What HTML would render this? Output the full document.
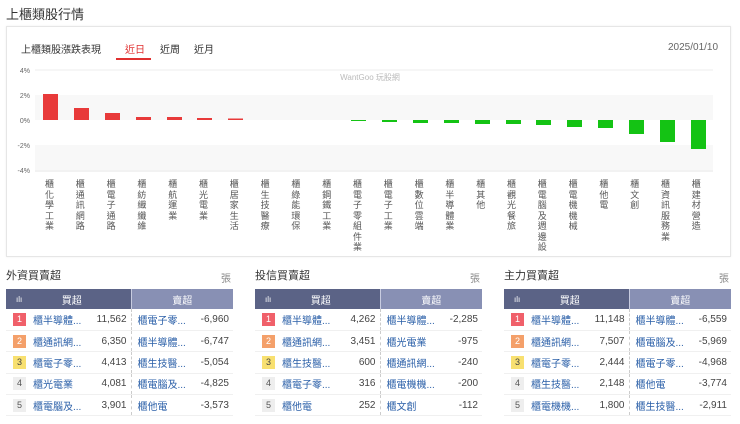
<!DOCTYPE html>
<html><head><meta charset="utf-8"><style>
*{margin:0;padding:0;box-sizing:border-box}
body{width:740px;height:424px;background:#fff;font-family:"Liberation Sans","Noto Sans CJK TC",sans-serif;color:#333;position:relative;overflow:hidden}
.a{position:absolute;white-space:nowrap}
.box{position:absolute;left:6px;top:26px;width:725px;height:231px;border:1px solid #e6e6e6;box-shadow:0 0 2px #eee}
.tb{position:absolute;top:268px;width:227px}
.tb h3{font-size:11px;font-weight:normal;color:#333;height:21px;line-height:16px}
.tb .u{position:absolute;right:2px;top:2px;font-size:10px;color:#888}
table{border-collapse:collapse;width:227px;font-size:10px;table-layout:fixed}
th{height:20px;color:#fff;font-weight:normal;font-size:10px;padding:0}
th.b{background:#5b6386;text-align:center}
th.s{background:#8890b4;border-left:1px solid #c8cce0;text-align:center}
td{height:21.4px;border-bottom:1px solid #f0f0f0;padding:0;overflow:hidden;white-space:nowrap}
td.r{text-align:center}
td.r span{display:inline-block;width:13px;height:13px;line-height:13px;font-size:9px;color:#555;background:#eee}
td.n{color:#2a5fa8}
td.v{text-align:right;padding-right:4px;color:#444;border-right:1px dashed #ccc}
td.n2{color:#2a5fa8;padding-left:6px}
td.v2{text-align:right;padding-right:4px;color:#444}
</style></head><body>
<div class="a" style="left:6px;top:4px;font-size:13px;color:#333">上櫃類股行情</div>
<div class="box"></div>
<div class="a" style="left:21px;top:41px;font-size:10px;color:#333">上櫃類股漲跌表現</div>
<div class="a" style="left:125px;top:41px;font-size:10px;color:#e03030">近日</div>
<div class="a" style="left:116px;top:58px;width:35px;height:2px;background:#e03030"></div>
<div class="a" style="left:160px;top:41px;font-size:10px;color:#333">近周</div>
<div class="a" style="left:194px;top:41px;font-size:10px;color:#333">近月</div>
<div class="a" style="left:668px;top:42px;font-size:10px;color:#666">2025/01/10</div>
<svg class="a" style="left:0;top:0" width="740" height="260">
<rect x="35" y="95" width="678" height="25" fill="#f8f8f8"/>
<rect x="35" y="145" width="678" height="25" fill="#f8f8f8"/>
<line x1="35" y1="70" x2="713" y2="70" stroke="#eee"/>
<line x1="35" y1="171" x2="713" y2="171" stroke="#e6e6e6"/>
<g font-size="7" fill="#666" text-anchor="end" font-family="Liberation Sans">
<text x="30" y="73">4%</text><text x="30" y="98">2%</text><text x="30" y="123">0%</text><text x="30" y="148">-2%</text><text x="30" y="173">-4%</text></g>
<text x="370" y="80" font-size="8" fill="#bbb" text-anchor="middle">WantGoo 玩股網</text>
<g fill="#e83a3a">
<rect x="43" y="94" width="15" height="26"/><rect x="74" y="108" width="15" height="12"/><rect x="105" y="113" width="15" height="7"/><rect x="136" y="117" width="15" height="3"/><rect x="167" y="117" width="15" height="3"/><rect x="197" y="118" width="15" height="2"/><rect x="228" y="118.5" width="15" height="1.5"/></g>
<g fill="#14c314">
<rect x="351" y="120" width="15" height="1"/><rect x="382" y="120" width="15" height="2"/><rect x="413" y="120" width="15" height="3"/><rect x="444" y="120" width="15" height="3"/><rect x="475" y="120" width="15" height="4"/><rect x="506" y="120" width="15" height="4"/><rect x="536" y="120" width="15" height="5"/><rect x="567" y="120" width="15" height="7"/><rect x="598" y="120" width="15" height="8"/><rect x="629" y="120" width="15" height="14"/><rect x="660" y="120" width="15" height="22"/><rect x="691" y="120" width="15" height="29"/></g>
</svg>
<div id="lbl"></div>
<script>
var n=["櫃化學工業","櫃通訊網路","櫃電子通路","櫃紡織纖維","櫃航運業","櫃光電業","櫃居家生活","櫃生技醫療","櫃綠能環保","櫃鋼鐵工業","櫃電子零組件業","櫃電子工業","櫃數位雲端","櫃半導體業","櫃其他","櫃觀光餐旅","櫃電腦及週邊設","櫃電機機械","櫃他電","櫃文創","櫃資訊服務業","櫃建材營造"];
var h="";for(var i=0;i<n.length;i++){h+='<div class="a" style="left:'+(45+i*30.8)+'px;top:179px;width:11px;font-size:9px;line-height:10.5px;color:#555;white-space:normal;word-break:break-all">'+n[i]+'</div>';}
document.getElementById("lbl").innerHTML=h;
</script>
<div id="tabs"></div>
<script>
var T=[["外資買賣超",6,[["櫃半導體...","11,562","櫃電子零...","-6,960"],["櫃通訊網...","6,350","櫃半導體...","-6,747"],["櫃電子零...","4,413","櫃生技醫...","-5,054"],["櫃光電業","4,081","櫃電腦及...","-4,825"],["櫃電腦及...","3,901","櫃他電","-3,573"]]],
["投信買賣超",255,[["櫃半導體...","4,262","櫃半導體...","-2,285"],["櫃通訊網...","3,451","櫃光電業","-975"],["櫃生技醫...","600","櫃通訊網...","-240"],["櫃電子零...","316","櫃電機機...","-200"],["櫃他電","252","櫃文創","-112"]]],
["主力買賣超",504,[["櫃半導體...","11,148","櫃半導體...","-6,559"],["櫃通訊網...","7,507","櫃電腦及...","-5,969"],["櫃電子零...","2,444","櫃電子零...","-4,968"],["櫃生技醫...","2,148","櫃他電","-3,774"],["櫃電機機...","1,800","櫃生技醫...","-2,911"]]]];
var c=["#f0606a;color:#fff","#f4a06a;color:#fff","#f8e070;color:#444","#eee","#eee"];
var h="";T.forEach(function(t){h+='<div class="tb" style="left:'+t[1]+'px"><h3>'+t[0]+'</h3><span class="u">張</span><table><colgroup><col style="width:27px"><col style="width:62px"><col style="width:36px"><col style="width:62px"><col style="width:40px"></colgroup><tr><th class="b" style="text-align:left;padding-left:10px;font-size:8px">ılı</th><th class="b" colspan="2" style="padding-right:20px">買超</th><th class="s" colspan="2">賣超</th></tr>';
t[2].forEach(function(r,i){h+='<tr><td class="r"><span style="background:'+c[i]+'">'+(i+1)+'</span></td><td class="n">'+r[0]+'</td><td class="v">'+r[1]+'</td><td class="n2">'+r[2]+'</td><td class="v2">'+r[3]+'</td></tr>';});
h+='</table></div>';});
document.getElementById("tabs").innerHTML=h;
</script>
</body></html>
